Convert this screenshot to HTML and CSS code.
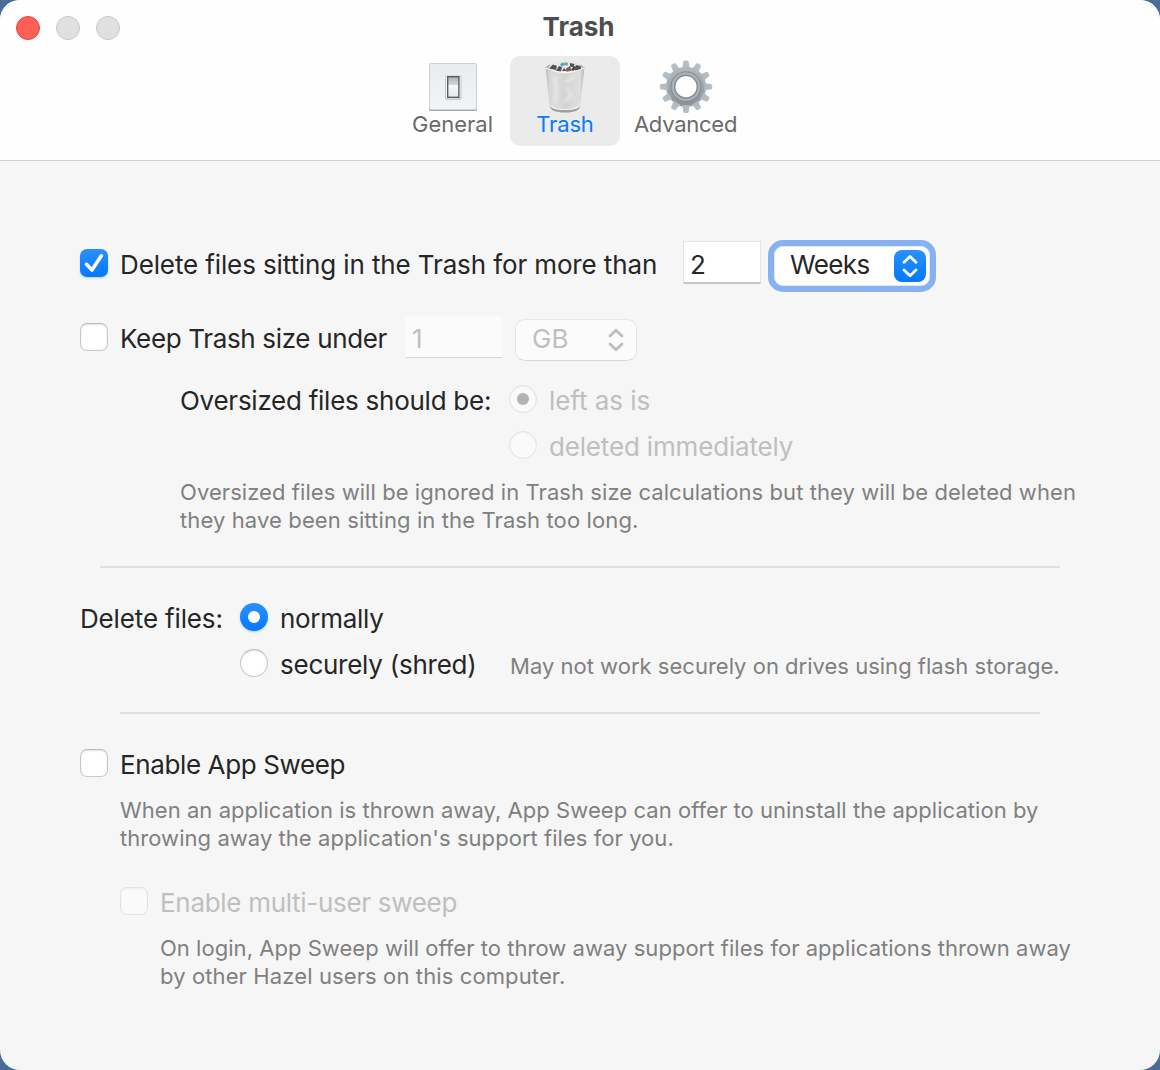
FILE: index.html
```html
<!DOCTYPE html>
<html lang="en">
<head>
<meta charset="utf-8">
<title>Trash</title>
<link rel="stylesheet" href="styles.css">
</head>
<body>
<main class="window">
  <header class="toolbar">
    <div class="titlebar">
      <div class="lights"><i class="light close"></i><i class="light"></i><i class="light"></i></div>
      <h1 class="title">Trash</h1>
    </div>
    <nav class="tabs">
      <a class="tab tab-general">
        <svg class="tab-icon" width="56" height="55" viewBox="0 0 56 55">
          <defs>
            <linearGradient id="plate" x1="0" y1="0" x2="0" y2="1"><stop offset="0" stop-color="#e9ecef"/><stop offset="1" stop-color="#f2f4f7"/></linearGradient>
            <linearGradient id="rocker" x1="0" y1="0" x2="0" y2="1"><stop offset="0" stop-color="#a9afb4"/><stop offset=".38" stop-color="#d3d7da"/><stop offset=".42" stop-color="#f6f7f8"/><stop offset="1" stop-color="#e6e8ea"/></linearGradient>
          </defs>
          <rect x="4" y="7.500" width="48" height="47.500" rx="1.500" fill="#a5a9ad"/>
          <rect x="4.500" y="7.500" width="47" height="46" rx="1.200" fill="url(#plate)" stroke="#cdd1d4"/>
          <rect x="20" y="19" width="16.500" height="25" rx="2.500" fill="#c4c8cb"/>
          <rect x="21" y="19.500" width="14.500" height="23" rx="2" fill="#f5f6f7"/>
          <rect x="22.700" y="20.700" width="11.200" height="20.600" fill="url(#rocker)" stroke="#515456" stroke-width="1.300"/>
        </svg>
        <span>General</span>
      </a>
      <a class="tab tab-trash active">
        <svg class="tab-icon" width="56" height="55" viewBox="0 0 56 55">
          <defs>
            <linearGradient id="bin" x1="0" y1="0" x2="1" y2="0"><stop offset="0" stop-color="#b4b4b4"/><stop offset=".1" stop-color="#d6d6d6"/><stop offset=".3" stop-color="#dddcdb"/><stop offset=".5" stop-color="#d4d3d2"/><stop offset=".88" stop-color="#dfdfdf"/><stop offset="1" stop-color="#b4b4b4"/></linearGradient>
            <filter id="soft" x="-30%" y="-20%" width="160%" height="140%"><feGaussianBlur stdDeviation="1.600"/></filter>
          </defs>
          <path d="M8.500 11 Q28 5 47.500 11 L43.200 50 Q42.300 56.500 28 56.500 Q13.700 56.500 12.800 50Z" fill="url(#bin)"/>
          <ellipse cx="28" cy="11.500" rx="18.500" ry="5" fill="#a6a8a8"/>
          <path d="M11 12l3.500-5 4-2 3 1 2-1 5 2 6-2.500 4 3 4 .5 3 4-5 3-11 2-11-1z" fill="#e6e8e8"/>
          <path d="M12 12.500l4-4 4 1.500-1 4zM19 15l3-5 3 1-1 4.500zM33 7l4.500 1-1 3.500-3.500-1zM37 14l2-5 4.500 1 1 3-5 2zM25 15l2-3 3 3z" fill="#505252"/>
          <path d="M23 8l3.500-1.500 1.500 2.500-3.500 1.500z" fill="#4a9de0"/><path d="M27.500 6.500l3.500 .5-.5 2.500-3-.5z" fill="#58b665"/><path d="M29 12.500l4-2.500 1.500 4.500-5 1.500z" fill="#8a5a45"/><path d="M34 14l3-4 1.500 1-2 4z" fill="#33424a"/>
          <path d="M9 12Q28 21 47 12" fill="none" stroke="#f7f7f7" stroke-width="1.300"/>
          <g fill="none" stroke="#efeeed" opacity=".65" filter="url(#soft)"><path d="M17 20l2 13-1 14M38 20q-4 4-10 6" stroke-width="3"/><path d="M29 31l5 8-7 7" stroke-width="3"/></g>
          <path d="M12.800 50Q13.700 56.500 28 56.500 42.300 56.500 43.200 50 41 54 28 54 15 54 12.800 50z" fill="#9f9f9f"/>
          <path d="M14 49.500Q16 53.500 28 53.500 40 53.500 42 49.500" fill="none" stroke="#f3f3f3" stroke-width="1.200"/>
        </svg>
        <span>Trash</span>
      </a>
      <a class="tab tab-advanced">
        <svg class="tab-icon" width="56" height="55" viewBox="0 0 56 55">
          <defs>
            <linearGradient id="steel" gradientUnits="userSpaceOnUse" x1="0" y1="5" x2="0" y2="57"><stop offset="0" stop-color="#b5c0c7"/><stop offset=".5" stop-color="#a0a6ab"/><stop offset="1" stop-color="#858789"/></linearGradient>
            <mask id="hole" maskUnits="userSpaceOnUse" x="0" y="0" width="56" height="60"><rect width="56" height="60" fill="#fff"/><circle cx="28" cy="30.700" r="10.800" fill="#000"/></mask>
            <g id="pair"><path id="tooth" d="M23.500 12.500 Q25 11 25.200 6 Q25.400 4.500 26.700 4.500 H29.300 Q30.600 4.500 30.800 6 Q31 11 32.500 12.500Z"/><use href="#tooth" transform="rotate(180 28 30.700)"/></g>
          </defs>
          <g mask="url(#hole)" fill="url(#steel)">
            <circle cx="28" cy="30.700" r="20"/>
            <use href="#pair"/><use href="#pair" transform="rotate(30 28 30.700)"/><use href="#pair" transform="rotate(60 28 30.700)"/><use href="#pair" transform="rotate(90 28 30.700)"/><use href="#pair" transform="rotate(120 28 30.700)"/><use href="#pair" transform="rotate(150 28 30.700)"/>
          </g>
          <circle cx="28" cy="30.700" r="14.900" fill="none" stroke="#868d92" stroke-width="1.200"/>
          <circle cx="28" cy="30.700" r="13.200" fill="none" stroke="#aab1b6" stroke-width="2.200"/>
          <circle cx="28" cy="30.700" r="11.300" fill="none" stroke="#858a8e" stroke-width="1.200"/>
        </svg>
        <span>Advanced</span>
      </a>
    </nav>
  </header>

  <section class="content">
    <div class="row row-age">
      <span class="check on"><svg width="28" height="28" viewBox="0 0 28 28"><path d="M6.500 15.300 12 21 21.300 6.800" fill="none" stroke="#fff" stroke-width="3.600" stroke-linecap="round" stroke-linejoin="round"/></svg></span>
      <label class="label age-label">Delete files sitting in the Trash for more than</label>
      <span class="field age-field">2</span>
      <span class="select focused"><span class="select-text">Weeks</span><span class="stepper"><svg width="32" height="32" viewBox="0 0 32 32"><path d="M10 12.200 16 6.500 22 12.200M10 20 16 25.700 22 20" fill="none" stroke="#fff" stroke-width="2.800" stroke-linecap="round" stroke-linejoin="round"/></svg></span></span>
    </div>
    <div class="row row-size">
      <span class="check"></span>
      <label class="label size-label">Keep Trash size under</label>
      <span class="field size-field">1</span>
      <span class="select disabled"><span class="select-text">GB</span><svg class="chevrons" width="16" height="24" viewBox="0 0 16 24"><path d="M2 8 8 2.300 14 8M2 16 8 21.700 14 16" fill="none" stroke="#bdbdbd" stroke-width="2.800" stroke-linecap="round" stroke-linejoin="round"/></svg></span>
    </div>
    <div class="group group-oversized">
      <label class="label group-label">Oversized files should be:</label>
      <div class="options">
        <div class="row"><span class="radio dim picked"></span><label class="label dim-text left-label">left as is</label></div>
        <div class="row"><span class="radio dim"></span><label class="label dim-text">deleted immediately</label></div>
      </div>
    </div>
    <p class="note note-oversized">Oversized files will be ignored in Trash size calculations but they will be deleted when<br><span class="loose">they have been sitting in the Trash too long.</span></p>
    <hr class="rule rule-wide">
    <div class="group group-delete">
      <label class="label group-label">Delete files:</label>
      <div class="options">
        <div class="row"><span class="radio on"></span><label class="label normal-label">normally</label></div>
        <div class="row"><span class="radio"></span><label class="label secure-label">securely (shred)</label><span class="note hint">May not work securely on drives using flash storage.</span></div>
      </div>
    </div>
    <hr class="rule rule-inset">
    <div class="row"><span class="check"></span><label class="label sweep-label">Enable App Sweep</label></div>
    <p class="note note-sweep">When an application is thrown away, App Sweep can offer to uninstall the application by<br>throwing away the application's support files for you.</p>
    <div class="row row-multi"><span class="check dim"></span><label class="label dim-text multi-label">Enable multi-user sweep</label></div>
    <p class="note note-multi">On login, App Sweep will offer to throw away support files for applications thrown away<br><span class="loose">by other Hazel users on this computer.</span></p>
  </section>
</main>
</body>
</html>
```
FILE: styles.css
```css
* { box-sizing: border-box; }
body { margin: 0; background: #4a6c9b; font-family: Inter, "Liberation Sans", sans-serif; color: #262626; }
.window { width: 1160px; height: 1070px; border-radius: 20px; background: #f6f6f6; overflow: hidden; }
.toolbar { height: 161px; background: #fefefe; border-bottom: 1px solid #d2d2d2; }
.titlebar { display: grid; grid-template-columns: 1fr auto 1fr; height: 56px; padding: 0 3px 0 0; }
.lights { display: flex; gap: 16px; padding: 16px; }
.light { width: 24px; height: 24px; border-radius: 50%; background: #e0e0e0; border: 1px solid #c6c6c6; }
.light.close { background: #ff5f57; border-color: #e2463f; }
.title { margin: 11px 0 0; font-size: 26px; line-height: 31px; font-weight: 700; color: #4d4d4d; }
.tabs { display: flex; margin-left: 395px; }
.tab { display: flex; flex-direction: column; align-items: center; height: 90px; border-radius: 10px; font-size: 22px; line-height: 26px; color: #6a6a6a; }
.tab-icon { display: block; flex: none; overflow: visible; }
.tab-general { width: 115px; }
.tab-trash { width: 110px; letter-spacing: -.15px; }
.tab-advanced { width: 131px; letter-spacing: -.25px; }
.tab.active { background: #ebebeb; color: #0a7aff; }
.content { padding: 79px 80px 0; }
.row { display: flex; align-items: flex-start; height: 31px; }
.label { font-size: 26px; line-height: 31px; letter-spacing: -.17px; white-space: nowrap; }
.check, .radio { flex: none; width: 28px; height: 28px; margin-right: 12px; background: #fff; border: 1px solid #c9c9c9; border-top-color: #bababa; box-shadow: inset 0 1px 2px rgba(0,0,0,.12); }
.check { border-radius: 7px; }
.radio { border-radius: 50%; }
.check.on, .radio.on { border: 0; background: linear-gradient(#2b90ff, #0578ff); box-shadow: 0 1px 2px rgba(10,122,255,.3); }
.radio.on, .radio.picked { display: grid; place-items: center; }
.radio.on::after, .radio.picked::after { content: ""; width: 12px; height: 12px; border-radius: 50%; background: #fff; }
.radio.picked::after { background: #b3b3b3; }
.check.dim, .radio.dim { background: #fafafa; border-color: #e2e2e2; box-shadow: inset 0 1px 2px rgba(0,0,0,.05); }
.dim-text { color: #bfbfbf; }
.field { height: 43px; padding: 7px 0 0 6px; background: #fff; border: 1px solid #e4e4e4; border-bottom: 2px solid #c6c6c6; font-size: 26px; line-height: 31px; }
.row-age { height: 52px; }
.row-age .check, .age-label { margin-top: 9px; }
.age-label { width: 563px; letter-spacing: -.12px; }
.age-field { width: 78px; margin: 1px 7px 0 0; }
.select { display: flex; font-size: 26px; line-height: 31px; }
.select.focused { width: 168px; height: 52px; padding: 4px 4px 0 16px; border: 6px solid #86b1f2; border-radius: 15px; background: #fff; box-shadow: inset 0 0 0 1px #dfe8f6; justify-content: space-between; }
.focused .select-text { margin-top: -1px; letter-spacing: -.6px; }
.stepper { width: 32px; height: 32px; border-radius: 8px; background: linear-gradient(#2b90ff, #0578ff); }
.stepper svg, .check svg { display: block; }
.row-size { height: 45px; margin-top: 24px; }
.row-size .check, .size-label { margin-top: 7px; }
.size-label { width: 285px; letter-spacing: -.34px; }
.size-field { width: 98px; height: 42px; margin-right: 12px; background: #fbfbfb; color: #bfbfbf; border-color: #f8f8f8; border-bottom: 1px solid #d4d4d4; padding: 6px 0 0 6px; }
.select.disabled { width: 122px; height: 42px; margin-top: 3px; padding: 3px 12px 0 16px; border: 1px solid #e6e6e6; border-bottom-color: #d8d8d8; border-radius: 10px; background: #fbfbfb; color: #bfbfbf; justify-content: space-between; }
.chevrons { margin-top: 5px; }
.group { display: flex; align-items: flex-start; }
.options { display: flex; flex-direction: column; gap: 15px; }
.group-oversized { margin: 24px 0 0 100px; }
.group-oversized .group-label { width: 329px; letter-spacing: -.26px; }
.left-label { letter-spacing: -.06px; }
.note { margin: 16px 0 0; font-size: 22px; line-height: 28px; letter-spacing: .05px; color: #808080; white-space: nowrap; }
.note-oversized { margin-left: 100px; letter-spacing: .068px; }
.loose { letter-spacing: .115px; }
.rule { height: 2px; border: 0; background: #dfdfdf; }
.rule-wide { margin: 32px 20px 35px; }
.group-delete .group-label { width: 160px; letter-spacing: -.15px; }
.normal-label { letter-spacing: -.3px; }
.secure-label { width: 230px; letter-spacing: -.25px; }
.hint { margin-top: 3px; letter-spacing: .01px; }
.rule-inset { margin: 32px 40px 35px; }
.sweep-label { letter-spacing: -.38px; }
.note-sweep { margin-left: 40px; }
.row-multi { margin: 35px 0 0 40px; }
.multi-label { letter-spacing: -.3px; }
.note-multi { margin-left: 80px; letter-spacing: .036px; }
```
